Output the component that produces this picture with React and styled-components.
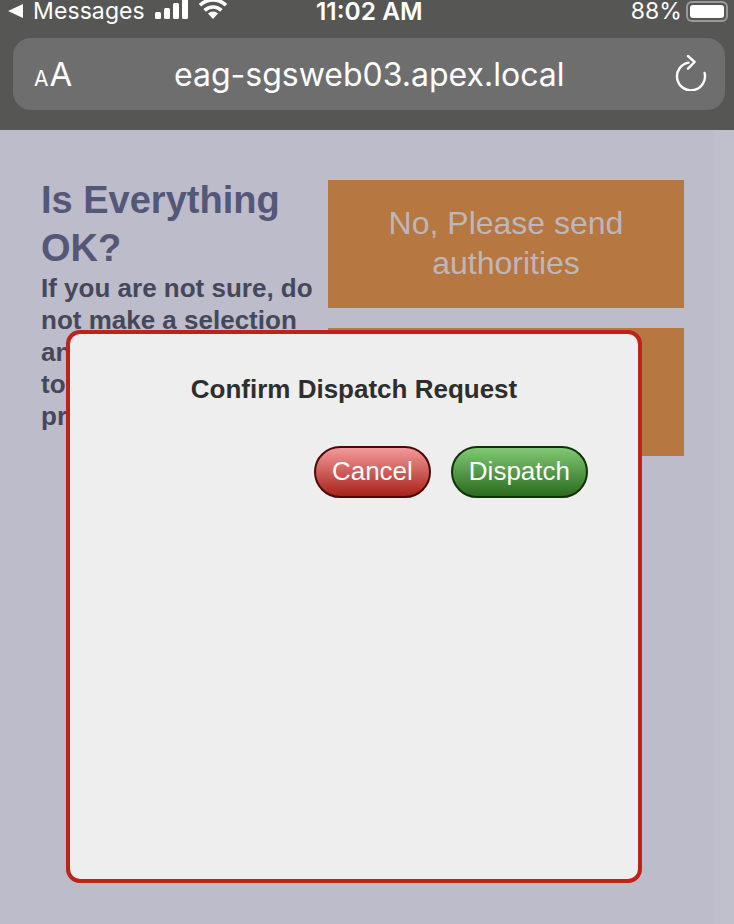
import React from "react";
import styled, { createGlobalStyle } from "styled-components";

const GlobalStyle = createGlobalStyle`
  html, body {
    margin: 0;
    padding: 0;
    background: #bcbcca;
  }
`;

const App = () => {
  return (
    <React.Fragment>
      <GlobalStyle />
      <Screen>
        <BrowserChrome>
          <StatusBar>
            <StatusLeft>
              <BackArrow />
              <StatusText>Messages</StatusText>
              <SignalIcon />
              <WifiIcon />
            </StatusLeft>
            <StatusTime>11:02 AM</StatusTime>
            <StatusRight>
              <StatusText>88%</StatusText>
              <Battery>
                <BatteryFill />
              </Battery>
            </StatusRight>
          </StatusBar>
          <UrlBar>
            <TextSize>
              <SmallA>A</SmallA>
              <BigA>A</BigA>
            </TextSize>
            <UrlText>eag-sgsweb03.apex.local</UrlText>
            <ReloadIcon />
          </UrlBar>
        </BrowserChrome>

        <Page>
          <Question>
            <Heading>Is Everything OK?</Heading>
            <Hint>
              If you are not sure, do not make a selection and wait for someone
              to assist you and provide help
            </Hint>
          </Question>
          <Choices>
            <Choice>No, Please send authorities</Choice>
            <Choice>Yes, I am OK</Choice>
          </Choices>
        </Page>

        <Modal>
          <ModalTitle>Confirm Dispatch Request</ModalTitle>
          <ModalActions>
            <PillButton $variant="cancel">Cancel</PillButton>
            <PillButton $variant="dispatch">Dispatch</PillButton>
          </ModalActions>
        </Modal>
      </Screen>
    </React.Fragment>
  );
};

const SignalIcon = () => (
  <SignalSvg viewBox="0 0 34 20" width="34" height="20">
    <rect x="0" y="13" width="6" height="7" rx="1.5" fill="#fff" />
    <rect x="9" y="9" width="6" height="11" rx="1.5" fill="#fff" />
    <rect x="18" y="4" width="6" height="16" rx="1.5" fill="#fff" />
    <rect x="27" y="-2" width="6" height="22" rx="1.5" fill="#fff" />
  </SignalSvg>
);

const WifiIcon = () => (
  <WifiSvg viewBox="0 0 30 22" width="30" height="22">
    <path d="M15 21l-5-5.5a7 7 0 0 1 10 0z" fill="#fff" />
    <path d="M6.6 12.4a12 12 0 0 1 16.8 0" fill="none" stroke="#fff" strokeWidth="3.6" />
    <path d="M2 7.2a18.6 18.6 0 0 1 26 0" fill="none" stroke="#fff" strokeWidth="3.6" />
  </WifiSvg>
);

const ReloadIcon = () => (
  <ReloadSvg viewBox="0 0 32 36" width="32" height="36">
    <path
      d="M13.5 7.6A14 14 0 1 0 29.6 18"
      fill="none"
      stroke="#fff"
      strokeWidth="2.4"
      strokeLinecap="round"
    />
    <path
      d="M13 1l6.6 6-6.6 6.6"
      fill="none"
      stroke="#fff"
      strokeWidth="2.4"
      strokeLinecap="round"
      strokeLinejoin="round"
    />
  </ReloadSvg>
);

const Screen = styled.div`
  position: relative;
  width: 734px;
  height: 924px;
  overflow: hidden;
  background: linear-gradient(to right, #bcbcca 714px, #c0c0cc 714px);
`;

const BrowserChrome = styled.header`
  height: 130px;
  background: #565654;
  display: flex;
  flex-direction: column;
  font-family: Inter, "Liberation Sans", sans-serif;
  color: #fff;
`;

const StatusBar = styled.div`
  height: 38px;
  box-sizing: border-box;
  padding: 0 6px 16px 8px;
  display: flex;
  align-items: center;
`;

const StatusLeft = styled.div`
  width: 308px;
  flex: none;
  display: flex;
  align-items: center;
`;

const BackArrow = styled.span`
  width: 0;
  height: 0;
  border-top: 7px solid transparent;
  border-bottom: 7px solid transparent;
  border-right: 15px solid #fff;
  margin-right: 10px;
`;

const StatusText = styled.span`
  font-size: 23px;
  line-height: 22px;
  font-weight: 400;
  letter-spacing: 0.1px;
`;

const SignalSvg = styled.svg`
  margin-left: 10px;
  margin-top: -4px;
  flex: none;
`;

const WifiSvg = styled.svg`
  margin-left: 9px;
  margin-top: -4px;
  flex: none;
`;

const StatusTime = styled.span`
  font-size: 24.5px;
  line-height: 22px;
  font-weight: 600;
  white-space: nowrap;
`;

const StatusRight = styled.div`
  margin-left: auto;
  display: flex;
  align-items: center;
  gap: 4px;
`;

const Battery = styled.div`
  width: 42px;
  height: 21px;
  box-sizing: border-box;
  border: 2px solid #9a9a98;
  border-radius: 6px;
  padding: 2px;
`;

const BatteryFill = styled.div`
  width: 34px;
  height: 13px;
  background: #fff;
  border-radius: 3px;
`;

const UrlBar = styled.div`
  height: 72px;
  margin: 0 9px 0 13px;
  padding: 0 10px 0 21px;
  background: #6e6e6e;
  border-radius: 18px;
  display: flex;
  align-items: center;
`;

const TextSize = styled.div`
  width: 140px;
  flex: none;
  display: flex;
  align-items: baseline;
`;

const SmallA = styled.span`
  font-size: 21px;
`;

const BigA = styled.span`
  font-size: 33px;
  margin-left: 1px;
`;

const UrlText = styled.div`
  font-size: 32px;
  font-weight: 400;
  white-space: nowrap;
`;

const ReloadSvg = styled.svg`
  margin-left: auto;
  margin-top: -2px;
  margin-right: 8px;
`;

const Page = styled.main`
  width: 684px;
  box-sizing: border-box;
  padding: 46px 0 0 41px;
  display: flex;
  gap: 14px;
  font-family: "Liberation Sans", Arial, sans-serif;
`;

const Question = styled.div`
  width: 273px;
  flex: none;
`;

const Heading = styled.h1`
  margin: 0;
  color: #555778;
  font-size: 38px;
  line-height: 48px;
  font-weight: 700;
`;

const Hint = styled.p`
  margin: 0;
  color: #47475b;
  font-size: 26px;
  line-height: 32px;
  font-weight: 700;
`;

const Choices = styled.div`
  flex: 1;
  margin-top: 4px;
  display: flex;
  flex-direction: column;
  gap: 20px;
`;

const Choice = styled.div`
  height: 128px;
  box-sizing: border-box;
  padding: 0 24px 2px;
  background: #b67741;
  color: #bfb6b9;
  font-size: 32px;
  line-height: 40px;
  text-align: center;
  display: flex;
  align-items: center;
  justify-content: center;
`;

const Modal = styled.section`
  position: absolute;
  left: 66px;
  top: 330px;
  width: 576px;
  height: 553px;
  box-sizing: border-box;
  padding: 40px 50px 0;
  background: #eeeeee;
  border: 4px solid #bd2318;
  border-radius: 14px;
  font-family: "Liberation Sans", Arial, sans-serif;
`;

const ModalTitle = styled.h2`
  margin: 0;
  color: #2e2e2e;
  font-size: 26px;
  line-height: 30px;
  font-weight: 700;
  text-align: center;
`;

const ModalActions = styled.div`
  margin-top: 42px;
  display: flex;
  justify-content: flex-end;
  gap: 20px;
`;

const PillButton = styled.button`
  height: 52px;
  box-sizing: border-box;
  padding: 0 16px 2px;
  border-radius: 26px;
  font-family: inherit;
  font-size: 26px;
  color: #fff;
  border: 2px solid ${(p) => (p.$variant === "cancel" ? "#4f0606" : "#0f3308")};
  background: ${(p) =>
    p.$variant === "cancel"
      ? "linear-gradient(to bottom, #f29a9a, #a8221a)"
      : "linear-gradient(to bottom, #80c973, #2b6b1e)"};
`;

export default App;
